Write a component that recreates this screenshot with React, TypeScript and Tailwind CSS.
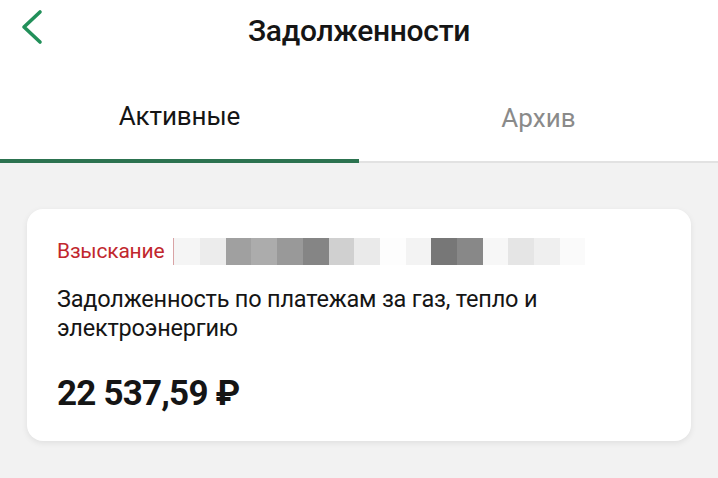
// pixelated (censored) block colours in the card's header row
const BLUR_BLOCKS = [
  '#f5f5f5', '#ececec', '#a0a0a0', '#acacac', '#999999', '#858585', '#d0d0d0', '#eaeaea',
  '#fdfdfd', '#f3f3f3', '#777777', '#888888', '#f7f7f7', '#e5e5e5', '#efefef', '#fafafa',
];

export default function App() {
  return (
    <div className="w-[718px] h-[478px] overflow-hidden bg-[#f2f2f2] font-['Roboto',sans-serif] text-[#151515]">
      {/* Top bar */}
      <div className="bg-white">
        <div className="relative h-[60px] flex items-center justify-center">
          <button aria-label="Назад" className="absolute left-[14px] top-[4px] text-[#22905a]">
            <svg width="36" height="48" viewBox="0 0 36 48" fill="none" aria-hidden="true">
              <polyline
                points="26,8 10,23 26,38"
                stroke="currentColor"
                strokeWidth="3.6"
                strokeLinecap="round"
                strokeLinejoin="round"
              />
            </svg>
          </button>
          <h1 className="text-[30px] font-medium tracking-[-0.3px]">Задолженности</h1>
        </div>

        {/* Tabs */}
        <div className="flex h-[103px]">
          <div className="w-1/2 flex items-center justify-center pt-[14px] border-b-4 border-[#2c7350]">
            <span className="text-[26px] tracking-[-0.1px]">Активные</span>
          </div>
          <div className="w-1/2 flex items-center justify-center pt-[16px] border-b-2 border-[#e2e2e2]">
            <span className="text-[26px] tracking-[0.1px] text-[#8a8a8a]">Архив</span>
          </div>
        </div>
      </div>

      {/* Debt card */}
      <div className="mx-[27px] mt-[46px] rounded-[16px] bg-white px-[30px] pt-[29px] pb-[27px] shadow-[0_2px_6px_rgba(0,0,0,0.08)]">
        <div className="flex items-center h-[27px]">
          <span className="text-[21px] text-[#c1272d] tracking-[-0.2px]">Взыскание</span>
          <span className="ml-[9px] w-px h-[27px] bg-[#d9a3a5]" />
          <div className="flex">
            {BLUR_BLOCKS.map((c, i) => (
              <span key={i} className="w-[25.7px] h-[27px]" style={{ backgroundColor: c }} />
            ))}
          </div>
        </div>

        <p className="mt-[20px] text-[23.5px] leading-[29px] tracking-[-0.2px] w-[540px]">
          Задолженность по платежам за газ, тепло и электроэнергию
        </p>

        <p className="mt-[31px] text-[35px] leading-[40px] font-bold tracking-[-0.8px]">22 537,59 ₽</p>
      </div>
    </div>
  );
}
